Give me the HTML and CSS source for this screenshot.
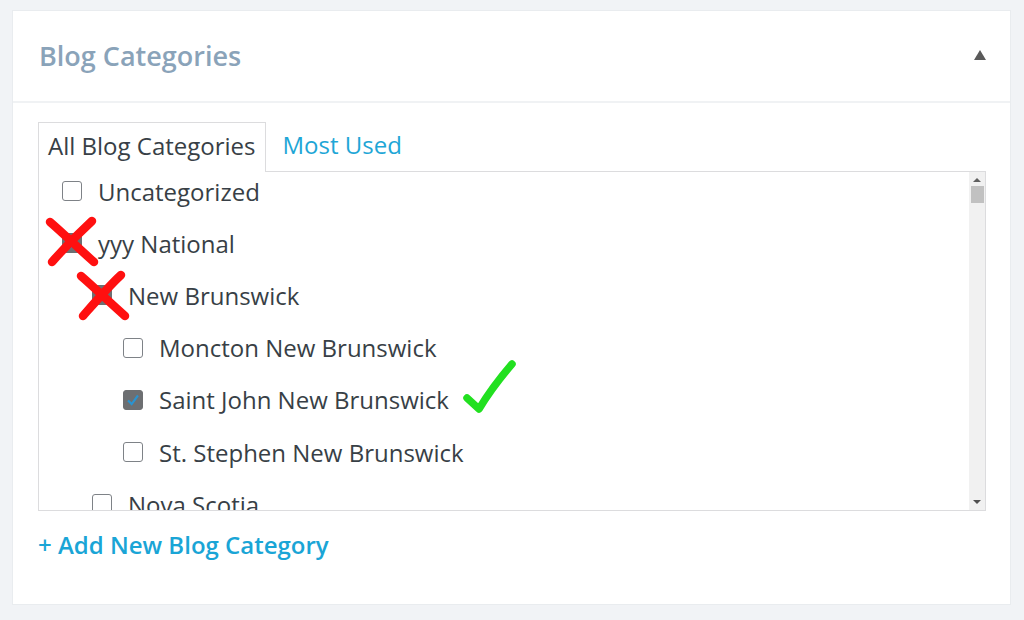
FILE: index.html
```html
<!DOCTYPE html>
<html>
<head>
<meta charset="utf-8">
<link rel="stylesheet" href="styles.css">
</head>
<body>
<div class="card">
  <div class="card-head">
    <h2 class="title">Blog Categories</h2>
    <span class="toggle"></span>
  </div>
  <div class="card-body">
    <div class="tabs">
      <div class="tab active">All Blog Categories</div>
      <div class="tab link">Most Used</div>
    </div>
    <div class="box">
      <div class="viewport">
        <ul class="list">
          <li class="row lvl0"><span class="cb"></span>Uncategorized</li>
          <li class="row lvl0"><span class="cb checked"><svg viewBox="0 0 20 20"><path d="M4.5 10.5 L8.5 14.5 L15.5 5" /></svg></span>yyy National</li>
          <li class="row lvl1"><span class="cb grey"></span>New Brunswick</li>
          <li class="row lvl2"><span class="cb"></span>Moncton New Brunswick</li>
          <li class="row lvl2"><span class="cb checked"><svg viewBox="0 0 20 20"><path d="M4.5 10.5 L8.5 14.5 L15.5 5" /></svg></span>Saint John New Brunswick</li>
          <li class="row lvl2"><span class="cb"></span>St. Stephen New Brunswick</li>
          <li class="row lvl1"><span class="cb"></span>Nova Scotia</li>
        </ul>
      </div>
      <div class="scrollbar">
        <span class="arr up"></span>
        <span class="thumb"></span>
        <span class="track"></span>
        <span class="arr down"></span>
      </div>
    </div>
    <a class="add" href="#">+ Add New Blog Category</a>
  </div>
</div>

<svg class="mark x1" viewBox="0 0 56 52"><path d="M6 6 C20 18 34 32 50 46 M48 5 C36 16 22 30 8 46"/></svg>
<svg class="mark x2" viewBox="0 0 56 52"><path d="M6 6 C20 18 34 32 50 46 M46 5 C34 16 22 30 8 46"/></svg>
<svg class="mark tick" viewBox="0 0 56 58"><path d="M5 40 L17 51 C26 36 38 20 50 6"/></svg>
</body>
</html>
```
FILE: styles.css
```css
html, body {
  margin: 0;
  padding: 0;
}
body {
  background: #f1f3f6;
  font-family: "Open Sans", "Noto Sans", sans-serif;
  width: 1024px;
  height: 620px;
  overflow: hidden;
  position: relative;
}
.card {
  margin: 10px 0 0 12px;
  width: 999px;
  height: 595px;
  background: #fff;
  border: 1px solid #e9ecef;
  box-sizing: border-box;
}
.card-head {
  height: 92px;
  border-bottom: 2px solid #f0f2f4;
  display: flex;
  align-items: center;
  justify-content: space-between;
  padding: 0 24px 0 26px;
  box-sizing: border-box;
}
.title {
  margin: 0;
  font-size: 27px;
  font-weight: 600;
  color: #8aa3b9;
  position: relative;
  top: -1px;
}
.toggle {
  width: 0;
  height: 0;
  border-left: 6.5px solid transparent;
  border-right: 6.5px solid transparent;
  border-bottom: 10px solid #5a5a5a;
  position: relative;
  top: -1px;
}
.card-body {
  padding: 19px 0 0 25px;
}
.tabs {
  display: flex;
  align-items: flex-end;
  height: 49px;
}
.tab {
  height: 49px;
  box-sizing: border-box;
  padding: 0 9px 0 9px;
  font-size: 24px;
  line-height: 45px;
  color: #383f46;
}
.tab.active {
  border: 1px solid #dcdcde;
  border-bottom: none;
  background: #fff;
  position: relative;
  z-index: 1;
  height: 50px;
  margin-bottom: -1px;
}
.tab.link {
  color: #1ea6d6;
  padding-left: 17px;
}
.box {
  width: 948px;
  height: 340px;
  border: 1px solid #dcdcde;
  box-sizing: border-box;
  display: flex;
}
.viewport {
  flex: 1;
  overflow: hidden;
}
.list {
  list-style: none;
  margin: -7px 0 0 0;
  padding: 0 0 0 23px;
}
.row {
  height: 52.2px;
  display: flex;
  align-items: center;
  font-size: 24px;
  color: #383f46;
  white-space: nowrap;
}
.lvl1 { padding-left: 30px; }
.lvl2 { padding-left: 61px; }
.cb {
  width: 20px;
  height: 20px;
  box-sizing: border-box;
  border: 1.6px solid #7e8287;
  border-radius: 3px;
  margin-right: 16px;
  flex: none;
  display: flex;
  align-items: center;
  justify-content: center;
}
.cb.checked, .cb.grey {
  background: #6d6f72;
  border-color: #6d6f72;
}
.cb svg {
  width: 18px;
  height: 18px;
  fill: none;
  stroke: #2a93d0;
  stroke-width: 2.4;
}
.scrollbar {
  width: 16px;
  background: #f1f1f1;
  display: flex;
  flex-direction: column;
  align-items: center;
}
.arr {
  width: 0;
  height: 0;
  border-left: 4px solid transparent;
  border-right: 4px solid transparent;
  margin: 6px 0 4px;
}
.arr.up { border-bottom: 4px solid #606060; }
.arr.down { border-top: 4px solid #505050; margin: 4px 0 6px; }
.thumb {
  width: 13px;
  height: 17px;
  background: #c1c1c1;
}
.track { flex: 1; }
.add {
  display: inline-block;
  margin-top: 17px;
  font-size: 24px;
  font-weight: 600;
  color: #1aa5d6;
  text-decoration: none;
  margin-left: 0;
}
.mark {
  position: absolute;
  fill: none;
  stroke-linecap: round;
  stroke-linejoin: round;
}
.x1, .x2 {
  width: 56px;
  height: 52px;
  stroke: #ff1010;
  stroke-width: 8.5;
}
.x1 { left: 44px; top: 216px; }
.x2 { left: 75px; top: 270px; }
.tick {
  left: 462px;
  top: 358px;
  width: 56px;
  height: 58px;
  stroke: #22e020;
  stroke-width: 7.5;
}
```
